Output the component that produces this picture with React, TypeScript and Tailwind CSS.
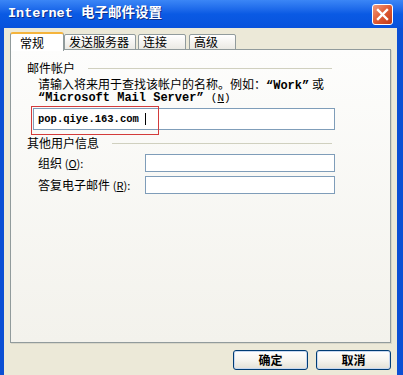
import React from "react";

const cjk = "font-['Noto_Sans_CJK_SC','Noto_Sans',sans-serif]";
const mono = "font-['Liberation_Mono','Noto_Sans_CJK_SC',monospace]";

const tabs = [
  { label: "常规", w: "w-[54px]", ml: "ml-0", active: true },
  { label: "发送服务器", w: "w-[72px]", ml: "ml-0", active: false },
  { label: "连接", w: "w-[48px]", ml: "ml-[2px]", active: false },
  { label: "高级", w: "w-[47px]", ml: "ml-[3px]", active: false },
];

function GroupHeader({ title }: { title: string }) {
  return (
    <div className="flex items-center h-[14px]">
      <span className="text-[12px] leading-[14px] text-black">{title}</span>
      <div className="flex-1 h-px bg-[#d0d0bf] ml-[13px] mr-[3px]" />
    </div>
  );
}

function Field({ label, keyChar }: { label: string; keyChar: string }) {
  return (
    <div className="flex items-center">
      <span className="ml-[11px] w-[107px] text-[12px] leading-[14px] text-black whitespace-nowrap">
        {label} <span className="text-[11px]">(<span className="underline">{keyChar}</span>):</span>
      </span>
      <div className="flex-1 h-[18px] border border-[#7f9db9] bg-white" />
    </div>
  );
}

function XpButton({ label }: { label: string }) {
  return (
    <div className="w-[75px] h-[20px] rounded-[3px] border border-[#003c74] bg-gradient-to-b from-white via-[#f6f5f0] to-[#e3e1d6] flex items-center justify-center shadow-[inset_0_0_0_1px_#c8d8f0]">
      <span className="text-[12px] leading-none text-black font-semibold">{label}</span>
    </div>
  );
}

export default function App() {
  return (
    <div className={`w-[403px] h-[375px] overflow-hidden bg-[#0b4fd4] flex flex-col ${cjk}`}>
      {/* title bar */}
      <div className="h-[28px] shrink-0 flex items-center justify-between pl-[8px] pr-[10px] bg-gradient-to-b from-[#3b86f6] via-[#0a5ae4] to-[#0852dc]">
        <span className={`text-white font-bold text-[13.5px] leading-none ${mono} [text-shadow:1px_1px_0_#0a2f8a]`}>
          Internet  电子邮件设置
        </span>
        <div className="w-[21px] h-[21px] rounded-[3px] border border-white bg-gradient-to-br from-[#f09a7c] via-[#df5a33] to-[#c03a18] flex items-center justify-center">
          <svg width="13" height="13" viewBox="0 0 13 13">
            <path d="M2 2 L11 11 M11 2 L2 11" stroke="white" strokeWidth="2.4" strokeLinecap="square" />
          </svg>
        </div>
      </div>

      {/* body */}
      <div className="flex-1 ml-[4px] mr-[6px] bg-[#ece9d8] pt-[4px] px-[6px] flex flex-col">
        {/* tabs */}
        <div className="flex items-end h-[18px] -mb-px relative z-10">
          {tabs.map((t) =>
            t.active ? (
              <div
                key={t.label}
                className={`${t.w} ${t.ml} h-[19px] -mb-px bg-white border-x border-[#919b9c] border-t-2 border-t-[#f5b43c] rounded-t-[3px] flex items-center pl-[9px]`}
              >
                <span className="text-[12px] leading-none text-black">{t.label}</span>
              </div>
            ) : (
              <div
                key={t.label}
                className={`${t.w} ${t.ml} h-[16px] bg-gradient-to-b from-white to-[#ebeae4] border border-[#919b9c] rounded-t-[2px] flex items-center pl-[4px]`}
              >
                <span className="text-[12px] leading-none text-black">{t.label}</span>
              </div>
            )
          )}
        </div>

        {/* tab page */}
        <div className="relative h-[294px] shrink-0 border border-[#919b9c] bg-gradient-to-b from-[#fdfdfc] to-[#f3f2ec] pt-[11px] pl-[16px] pr-[55px] shadow-[1px_1px_0_#d8d6c8]">
          <GroupHeader title="邮件帐户" />
          <div className="mt-[2px] ml-[11px] text-[12px] leading-[14px] text-black whitespace-nowrap">
            <div className="h-[14px]">
              请输入将来用于查找该帐户的名称。例如：<span className={`${mono} font-bold`}>“Work”</span>{" "}或
            </div>
            <div className={`h-[14px] ${mono}`}>
              <span className="font-bold">“Microsoft Mail Server”</span>{" "}
              <span className="text-[11px]">(<span className="underline">N</span>)</span>
            </div>
          </div>
          <div className="mt-[3px] ml-[6px] h-[22px] border border-[#7f9db9] bg-white flex items-center pl-[4px]">
            <span className={`${mono} font-bold text-[10.5px] leading-none text-black`}>pop.qiye.163.com</span>
            <span className="ml-[6px] w-px h-[12px] bg-black" />
          </div>
          <div className="mt-[6px]">
            <GroupHeader title="其他用户信息" />
          </div>
          <div className="mt-[4px] flex flex-col gap-[4px]">
            <Field label="组织" keyChar="O" />
            <Field label="答复电子邮件" keyChar="R" />
          </div>

          {/* annotation highlight */}
          <div className="absolute left-[20px] top-[56px] w-[128px] h-[29px] border-[1.5px] border-[#d33b3b]" />
        </div>

        {/* buttons */}
        <div className="mt-[7px] flex justify-end gap-[8px]">
          <XpButton label="确定" />
          <XpButton label="取消" />
        </div>
      </div>
    </div>
  );
}
